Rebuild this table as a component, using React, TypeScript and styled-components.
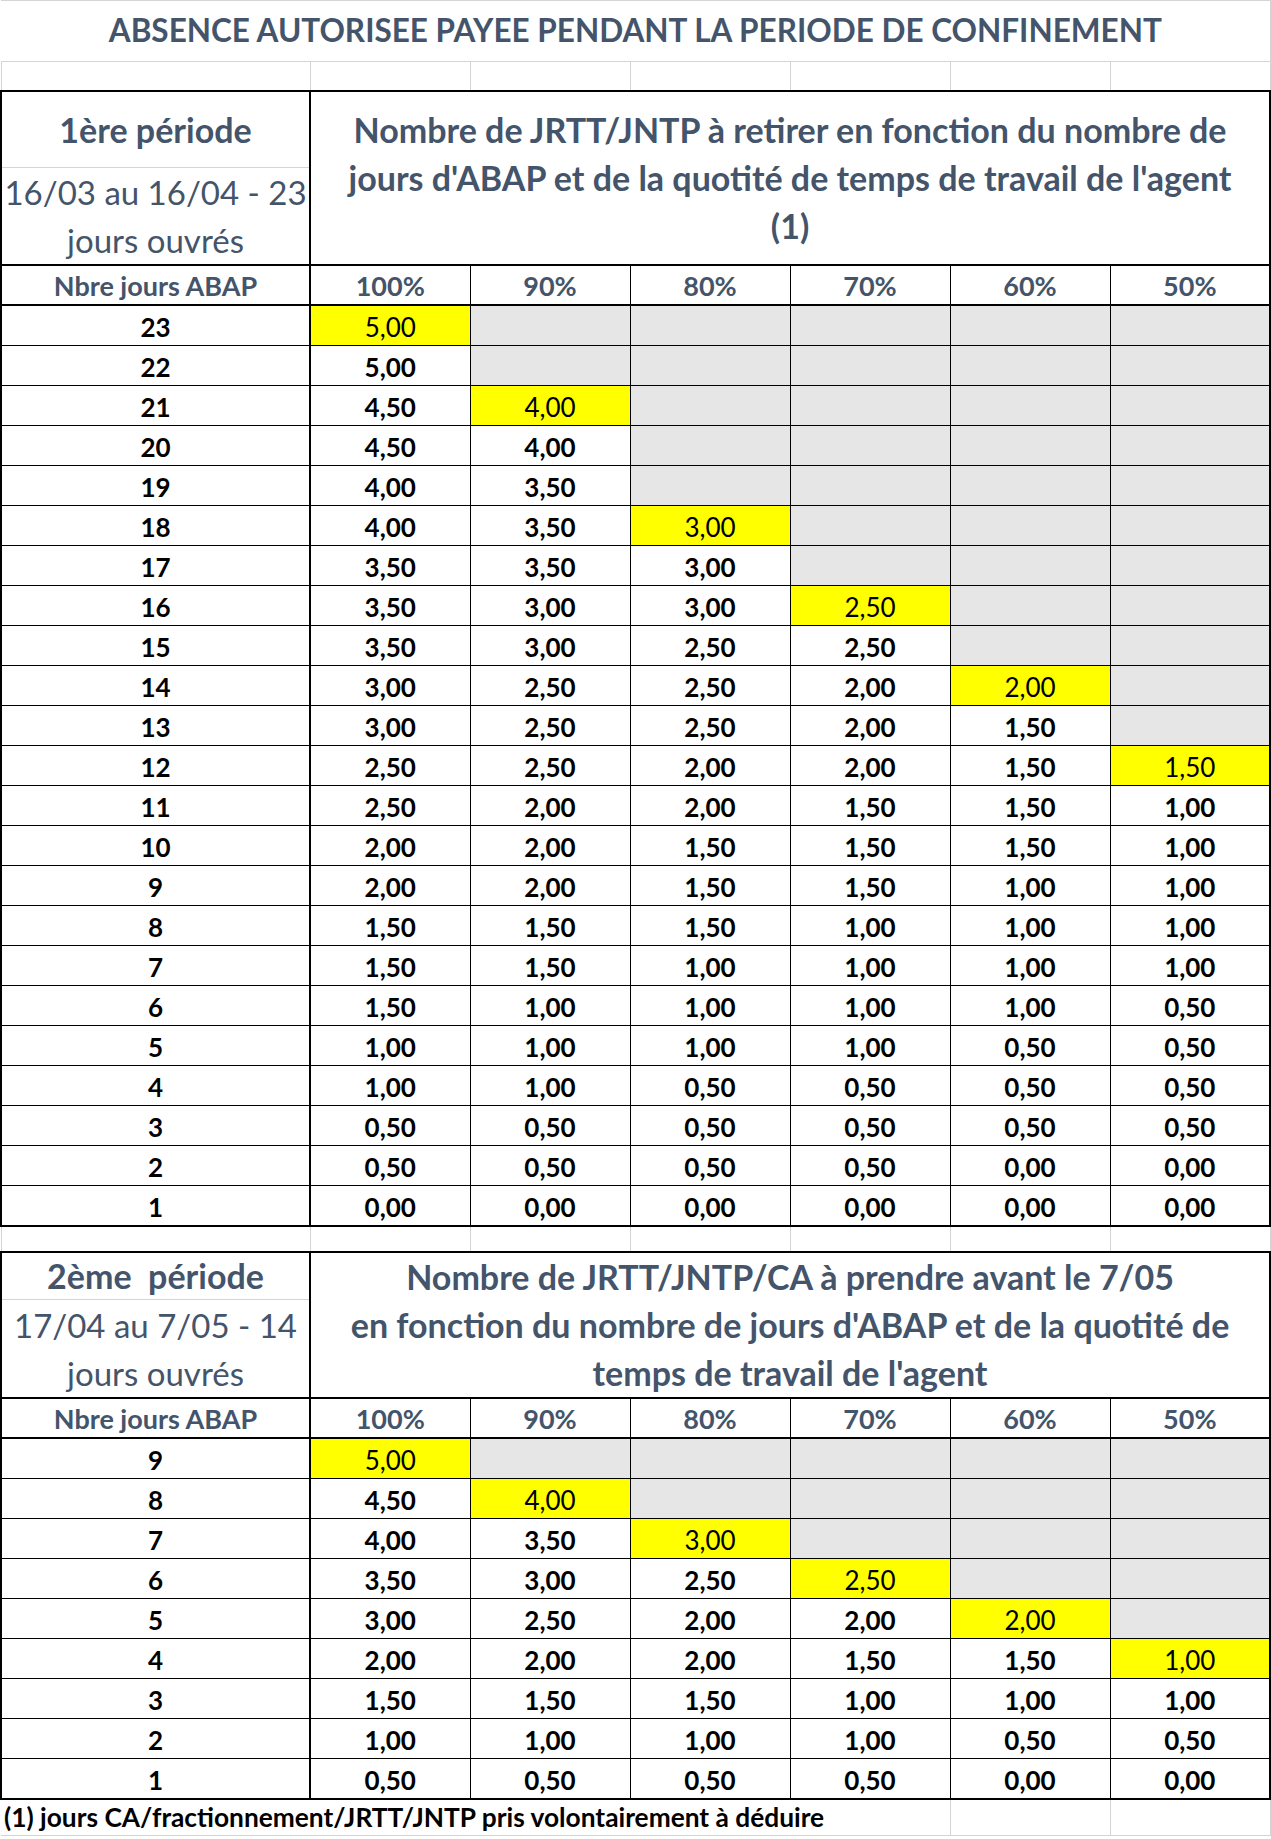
import React from "react";
import styled, { createGlobalStyle, css } from "styled-components";

const GRID = "#d4d4d4";
const INK = "#44546a";

const GlobalStyle = createGlobalStyle`
  html, body {
    margin: 0;
    padding: 0;
    background: #ffffff;
  }
  body {
    font-family: Lato, "Liberation Sans", sans-serif;
  }
`;

type Row = [number, string[]];

// "*" = highlighted cell, "" = greyed out cell
const firstPeriod: Row[] = [
  [23, ["*5,00", "", "", "", "", ""]],
  [22, ["5,00", "", "", "", "", ""]],
  [21, ["4,50", "*4,00", "", "", "", ""]],
  [20, ["4,50", "4,00", "", "", "", ""]],
  [19, ["4,00", "3,50", "", "", "", ""]],
  [18, ["4,00", "3,50", "*3,00", "", "", ""]],
  [17, ["3,50", "3,50", "3,00", "", "", ""]],
  [16, ["3,50", "3,00", "3,00", "*2,50", "", ""]],
  [15, ["3,50", "3,00", "2,50", "2,50", "", ""]],
  [14, ["3,00", "2,50", "2,50", "2,00", "*2,00", ""]],
  [13, ["3,00", "2,50", "2,50", "2,00", "1,50", ""]],
  [12, ["2,50", "2,50", "2,00", "2,00", "1,50", "*1,50"]],
  [11, ["2,50", "2,00", "2,00", "1,50", "1,50", "1,00"]],
  [10, ["2,00", "2,00", "1,50", "1,50", "1,50", "1,00"]],
  [9, ["2,00", "2,00", "1,50", "1,50", "1,00", "1,00"]],
  [8, ["1,50", "1,50", "1,50", "1,00", "1,00", "1,00"]],
  [7, ["1,50", "1,50", "1,00", "1,00", "1,00", "1,00"]],
  [6, ["1,50", "1,00", "1,00", "1,00", "1,00", "0,50"]],
  [5, ["1,00", "1,00", "1,00", "1,00", "0,50", "0,50"]],
  [4, ["1,00", "1,00", "0,50", "0,50", "0,50", "0,50"]],
  [3, ["0,50", "0,50", "0,50", "0,50", "0,50", "0,50"]],
  [2, ["0,50", "0,50", "0,50", "0,50", "0,00", "0,00"]],
  [1, ["0,00", "0,00", "0,00", "0,00", "0,00", "0,00"]],
];

const secondPeriod: Row[] = [
  [9, ["*5,00", "", "", "", "", ""]],
  [8, ["4,50", "*4,00", "", "", "", ""]],
  [7, ["4,00", "3,50", "*3,00", "", "", ""]],
  [6, ["3,50", "3,00", "2,50", "*2,50", "", ""]],
  [5, ["3,00", "2,50", "2,00", "2,00", "*2,00", ""]],
  [4, ["2,00", "2,00", "2,00", "1,50", "1,50", "*1,00"]],
  [3, ["1,50", "1,50", "1,50", "1,00", "1,00", "1,00"]],
  [2, ["1,00", "1,00", "1,00", "1,00", "0,50", "0,50"]],
  [1, ["0,50", "0,50", "0,50", "0,50", "0,00", "0,00"]],
];

const quotas = ["100%", "90%", "80%", "70%", "60%", "50%"];

const Sheet = styled.table`
  border-collapse: collapse;
  table-layout: fixed;
  width: 1269px;
  font-family: Lato, "Liberation Sans", sans-serif;
  td {
    padding: 0;
    text-align: center;
    vertical-align: middle;
    line-height: 1;
  }
`;

const TitleCell = styled.td`
  height: 60px;
  border-top: 1px solid ${GRID};
  border-bottom: 1px solid ${GRID};
  border-right: 1px solid ${GRID};
  color: ${INK};
  font-size: 31.5px;
  font-weight: 700;
  white-space: nowrap;
`;

const GridCell = styled.td<{ $h: number }>`
  height: ${(p) => p.$h}px;
  border-left: 1px solid ${GRID};
  border-right: 1px solid ${GRID};
`;

const PeriodCell = styled.td<{ $h: number; $part: "name" | "dates" }>`
  height: ${(p) => p.$h}px;
  border-left: 2px solid #000;
  border-right: 2px solid #000;
  color: ${INK};
  white-space: nowrap;
  ${(p) =>
    p.$part === "name"
      ? css`
          border-top: 2px solid #000;
          border-bottom: 1px solid ${GRID};
          font-size: 34px;
          font-weight: 700;
          line-height: 46px !important;
        `
      : css`
          border-bottom: 2px solid #000;
          font-size: 33px;
          font-weight: 400;
          line-height: 48px !important;
        `}
`;

const HeadingCell = styled.td`
  border: 2px solid #000;
  color: ${INK};
  font-size: 34px;
  font-weight: 700;
  line-height: 48px !important;
  white-space: nowrap;
`;

const ColumnHead = styled.td<{ $first?: boolean; $last?: boolean }>`
  height: 38px;
  border: 1px solid #000;
  border-bottom: 2px solid #000;
  ${(p) => p.$first && "border-left: 2px solid #000; border-right: 2px solid #000;"}
  ${(p) => p.$last && "border-right: 2px solid #000;"}
  color: ${INK};
  font-size: 27px;
  font-weight: 700;
`;

const RowLabel = styled.td<{ $end?: boolean }>`
  height: 37px;
  border: 1px solid #000;
  border-left: 2px solid #000;
  border-right: 2px solid #000;
  ${(p) => p.$end && "border-bottom: 2px solid #000;"}
  color: #000;
  font-size: 26px;
  font-weight: 700;
  padding-top: 2px !important;
`;

const ValueCell = styled.td<{ $kind: "plain" | "mark" | "void"; $last?: boolean; $end?: boolean }>`
  height: 37px;
  border: 1px solid #000;
  ${(p) => p.$last && "border-right: 2px solid #000;"}
  ${(p) => p.$end && "border-bottom: 2px solid #000;"}
  color: #000;
  font-size: 26px;
  padding-top: 2px !important;
  font-weight: ${(p) => (p.$kind === "mark" ? 400 : 700)};
  background: ${(p) =>
    p.$kind === "mark" ? "#ffff00" : p.$kind === "void" ? "#e7e6e6" : "#ffffff"};
`;

const FootNote = styled.td`
  height: 35px;
  border-bottom: 1px solid ${GRID};
  color: #000;
  font-size: 26.3px;
  font-weight: 700;
  text-align: left !important;
  padding-left: 3px !important;
  white-space: nowrap;
`;

const FootGrid = styled.td`
  border-left: 1px solid ${GRID};
  border-right: 1px solid ${GRID};
  border-bottom: 1px solid ${GRID};
`;

const Spacer = ({ h }: { h: number }) => (
  <tr>
    {Array.from({ length: 7 }).map((_, i) => (
      <GridCell key={i} $h={h} />
    ))}
  </tr>
);

const DataRows = ({ rows }: { rows: Row[] }) => (
  <>
    {rows.map(([label, values], r) => {
      const end = r === rows.length - 1;
      return (
        <tr key={label}>
          <RowLabel $end={end}>{label}</RowLabel>
          {values.map((v, i) => {
            const kind = v === "" ? "void" : v.startsWith("*") ? "mark" : "plain";
            return (
              <ValueCell key={i} $kind={kind} $last={i === 5} $end={end}>
                {v.replace("*", "")}
              </ValueCell>
            );
          })}
        </tr>
      );
    })}
  </>
);

const Heads = () => (
  <tr>
    <ColumnHead $first>Nbre jours ABAP</ColumnHead>
    {quotas.map((q, i) => (
      <ColumnHead key={q} $last={i === 5}>
        {q}
      </ColumnHead>
    ))}
  </tr>
);

export default function App() {
  return (
    <>
      <GlobalStyle />
      <Sheet>
        <colgroup>
          <col style={{ width: 309 }} />
          {quotas.map((q) => (
            <col key={q} style={{ width: 160 }} />
          ))}
        </colgroup>
        <tbody>
          <tr>
            <TitleCell colSpan={7}>ABSENCE AUTORISEE PAYEE PENDANT LA PERIODE DE CONFINEMENT</TitleCell>
          </tr>
          <Spacer h={28} />

          <tr>
            <PeriodCell $h={75} $part="name">1ère période</PeriodCell>
            <HeadingCell colSpan={6} rowSpan={2}>
              Nombre de JRTT/JNTP à retirer en fonction du nombre de
              <br />
              jours d'ABAP et de la quotité de temps de travail de l'agent
              <br />
              (1)
            </HeadingCell>
          </tr>
          <tr>
            <PeriodCell $h={96} $part="dates">
              16/03 au 16/04 - 23
              <br />
              jours ouvrés
            </PeriodCell>
          </tr>
          <Heads />
          <DataRows rows={firstPeriod} />

          <Spacer h={24} />

          <tr>
            <PeriodCell $h={45} $part="name">2ème&nbsp; période</PeriodCell>
            <HeadingCell colSpan={6} rowSpan={2}>
              Nombre de JRTT/JNTP/CA à prendre avant le 7/05
              <br />
              en fonction du nombre de jours d'ABAP et de la quotité de
              <br />
              temps de travail de l'agent
            </HeadingCell>
          </tr>
          <tr>
            <PeriodCell $h={96} $part="dates">
              17/04 au 7/05 - 14
              <br />
              jours ouvrés
            </PeriodCell>
          </tr>
          <Heads />
          <DataRows rows={secondPeriod} />

          <tr>
            <FootNote colSpan={5}>(1) jours CA/fractionnement/JRTT/JNTP pris volontairement à déduire</FootNote>
            <FootGrid />
            <FootGrid />
          </tr>
        </tbody>
      </Sheet>
    </>
  );
}
